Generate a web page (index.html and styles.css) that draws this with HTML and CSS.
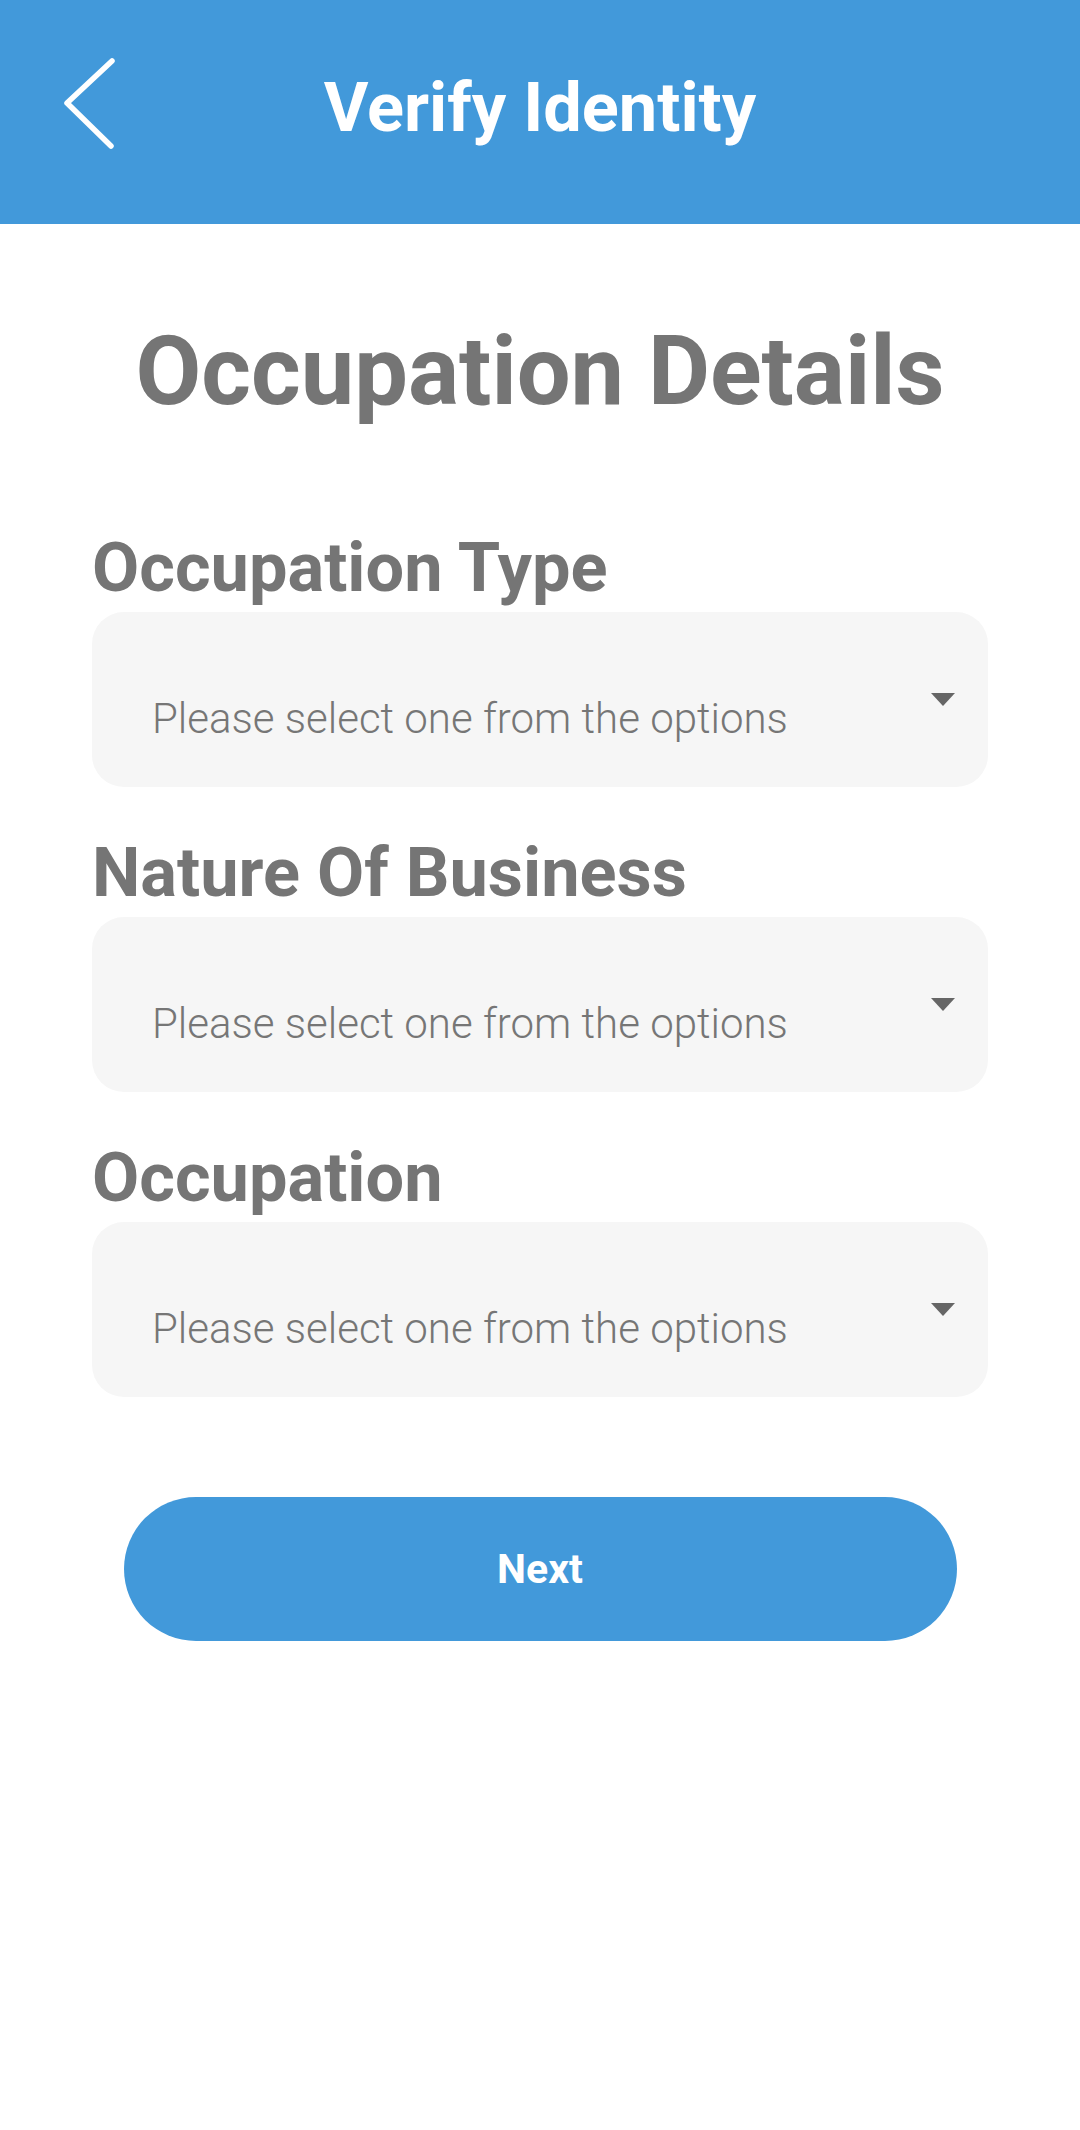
FILE: index.html
```html
<!DOCTYPE html>
<html lang="en">
<head>
<meta charset="utf-8">
<title>Verify Identity</title>
<link rel="stylesheet" href="styles.css">
</head>
<body>
<header class="appbar">
  <div class="appbar-left">
    <svg class="back-icon" viewBox="0 0 60 100" width="60" height="100" aria-hidden="true">
      <polyline points="52,8 7,50 51,93" fill="none" stroke="#ffffff" stroke-width="5.5" stroke-linecap="round" stroke-linejoin="round"/>
    </svg>
  </div>
  <h1 class="appbar-title">Verify Identity</h1>
  <div class="appbar-right"></div>
</header>

<main class="content">
  <h2 class="page-title">Occupation Details</h2>

  <form class="form">
    <div class="field">
      <label class="field-label">Occupation Type</label>
      <div class="select">
        <span class="select-text">Please select one from the options</span>
        <svg class="select-arrow" viewBox="0 0 24 13" width="24" height="13" aria-hidden="true"><polygon points="0,0 24,0 12,13" fill="#666666"/></svg>
      </div>
    </div>

    <div class="field">
      <label class="field-label">Nature Of Business</label>
      <div class="select">
        <span class="select-text">Please select one from the options</span>
        <svg class="select-arrow" viewBox="0 0 24 13" width="24" height="13" aria-hidden="true"><polygon points="0,0 24,0 12,13" fill="#666666"/></svg>
      </div>
    </div>

    <div class="field">
      <label class="field-label">Occupation</label>
      <div class="select">
        <span class="select-text">Please select one from the options</span>
        <svg class="select-arrow" viewBox="0 0 24 13" width="24" height="13" aria-hidden="true"><polygon points="0,0 24,0 12,13" fill="#666666"/></svg>
      </div>
    </div>

    <div class="actions">
      <button type="button" class="btn-next">Next</button>
    </div>
  </form>
</main>
</body>
</html>
```

FILE: styles.css
```css
* {
  box-sizing: border-box;
}

html, body {
  margin: 0;
  padding: 0;
  background: #ffffff;
}

body {
  font-family: Roboto, "Liberation Sans", Arial, sans-serif;
  color: #757575;
  width: 1080px;
  min-height: 2130px;
}

.appbar {
  height: 224px;
  background: #4299da;
  display: grid;
  grid-template-columns: 1fr auto 1fr;
  align-items: center;
  padding-bottom: 8px;
}

.appbar-left {
  align-self: start;
  padding-left: 60px;
  padding-top: 53px;
}

.back-icon {
  display: block;
}

.appbar-title {
  margin: 0;
  font-size: 68.5px;
  line-height: 82px;
  font-weight: 700;
  color: #ffffff;
  white-space: nowrap;
}

.content {
  padding: 0 92px;
}

.page-title {
  margin: 90px 0 0;
  text-align: center;
  font-size: 95.5px;
  line-height: 115px;
  font-weight: 700;
  color: #757575;
}

.form {
  margin-top: 101px;
  display: flex;
  flex-direction: column;
}

.field {
  display: flex;
  flex-direction: column;
}

.field + .field {
  margin-top: 48px;
}

.field-label {
  font-size: 68.5px;
  line-height: 76px;
  padding-bottom: 6px;
  font-weight: 700;
  color: #757575;
}

.select {
  height: 175px;
  background: #f6f6f6;
  border-radius: 32px;
  display: flex;
  align-items: center;
  justify-content: space-between;
  padding: 0 33px 0 60px;
}

.select-text {
  font-size: 42px;
  line-height: 49px;
  font-weight: 300;
  color: #767676;
  margin-top: 38px;
}

.select-arrow {
  display: block;
}

.actions {
  margin-top: 100px;
  display: flex;
  justify-content: center;
}

.btn-next {
  width: 833px;
  height: 144px;
  border: none;
  border-radius: 72px;
  background: #4299da;
  color: #ffffff;
  font-family: Roboto, "Liberation Sans", Arial, sans-serif;
  font-size: 41px;
  font-weight: 700;
  cursor: pointer;
}
```
